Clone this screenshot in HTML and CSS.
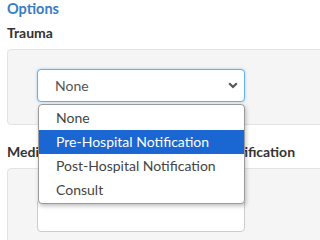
FILE: index.html
```html
<!DOCTYPE html>
<html>
<head>
<meta charset="utf-8">
<link rel="stylesheet" href="styles.css">
</head>
<body>
<div class="page">
  <h2 class="title">Options</h2>
  <div class="field">
    <div class="label">Trauma</div>
    <div class="panel">
      <div class="select focused">
        <span class="value">None</span>
        <svg class="chev" width="10" height="7" viewBox="0 0 10 7"><path d="M1.2 1.3 L5 5 L8.8 1.3" fill="none" stroke="#555" stroke-width="2.2"/></svg>
      </div>
      <div class="menu">
        <div class="opt">None</div>
        <div class="opt sel">Pre-Hospital Notification</div>
        <div class="opt">Post-Hospital Notification</div>
        <div class="opt">Consult</div>
      </div>
    </div>
  </div>
  <div class="field">
    <div class="label second">Medical Command Direct Specific Notification</div>
    <div class="panel panel2">
      <div class="select"></div>
    </div>
  </div>
</div>
</body>
</html>
```
FILE: styles.css
```css
html, body {
  margin: 0;
  padding: 0;
  overflow: hidden;
  background: #fff;
}
body {
  font-family: Lato, "Open Sans", sans-serif;
  color: #333;
}
.page {
  width: 500px;
  padding: 0 0 0 7px;
}
.title {
  margin: 0 0 5px 0;
  font-size: 14.5px;
  line-height: 18px;
  font-weight: 700;
  color: #3a7cc4;
}
.label {
  font-size: 14px;
  font-weight: 700;
  line-height: 20px;
  color: #333;
  white-space: nowrap;
  margin-bottom: 6px;
}
.panel {
  position: relative;
  background: #f5f5f5;
  border: 1px solid #e3e3e3;
  border-radius: 4px;
  padding: 19px 20px 22px 29px;
  margin-bottom: 17px;
}
.panel2 {
  padding-top: 30px;
  height: 60px;
}
.select {
  height: 31px;
  border: 1px solid #ccc;
  border-radius: 4px;
  background: #fff;
  display: flex;
  align-items: center;
  justify-content: space-between;
  padding: 0 5px 0 17px;
  box-sizing: content-box;
  width: 184px;
}
.select.focused {
  border-color: #66afe9;
  box-shadow: 0 0 3px rgba(102, 175, 233, 0.6);
}
.value {
  font-size: 14px;
  color: #555;
}
.chev {
  display: block;
  margin-right: 1px;
}
.menu {
  position: absolute;
  left: 30px;
  top: 54px;
  width: 205px;
  background: #fff;
  border: 1px solid #9a9a9a;
  border-radius: 4px;
  padding: 1px 0;
  box-shadow: 1px 2px 4px rgba(0, 0, 0, 0.25);
  z-index: 5;
}
.opt {
  height: 24px;
  line-height: 24px;
  padding-left: 17px;
  font-size: 14px;
  color: #444;
  white-space: nowrap;
}
.opt.sel {
  background: #1a66d2;
  color: #fff;
}
```
